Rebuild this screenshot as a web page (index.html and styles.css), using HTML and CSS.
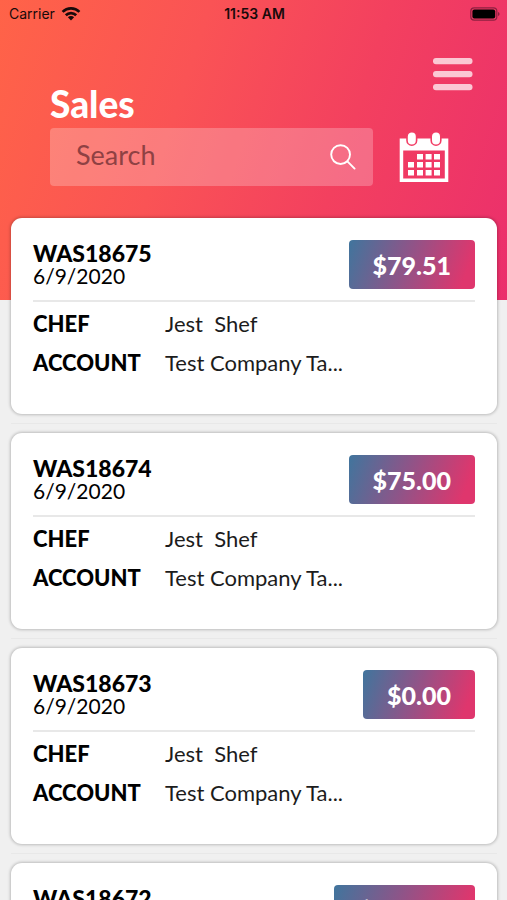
FILE: index.html
```html
<!DOCTYPE html>
<html lang="en">
<head>
<meta charset="utf-8">
<meta name="viewport" content="width=device-width, initial-scale=1">
<title>Sales</title>
<link rel="stylesheet" href="styles.css">
</head>
<body>
<div class="app">
  <div class="status">
    <div class="status-carrier">
      <span>Carrier</span>
      <svg width="20" height="16" viewBox="0 0 20 16" aria-hidden="true"><g fill="none" stroke="#190a0a" stroke-width="2.7"><path d="M1.6 5.9a12 12 0 0 1 16.8 0"/><path d="M4.8 9.2a7.4 7.4 0 0 1 10.4 0"/></g><path fill="#190a0a" d="M6.9 11.3a4.4 4.4 0 0 1 6.2 0L10 14.5z"/></svg>
    </div>
    <div class="status-time">11:53 AM</div>
    <div class="status-battery">
      <svg width="30" height="14" viewBox="0 0 30 14" aria-hidden="true"><rect x=".8" y=".8" width="26" height="12.4" rx="3.4" fill="none" stroke="#8d2040" stroke-width="1.2"/><rect x="2.4" y="2.4" width="22.8" height="9.2" rx="2" fill="#000"/><path d="M28 5v4q1.6-.6 1.6-2T28 5z" fill="#8d2040"/></svg>
    </div>
  </div>
  <header class="header">
    <div class="header-top">
      <h1>Sales</h1>
      <button class="icon-button menu" aria-label="Menu">
        <svg width="40" height="34" viewBox="0 0 40 34"><g fill="#fff" fill-opacity=".72"><rect x="0" y="1" width="39.5" height="6.2" rx="3"/><rect x="0" y="14" width="39.5" height="6.2" rx="3"/><rect x="0" y="27" width="39.5" height="6.2" rx="3"/></g></svg>
      </button>
    </div>
    <div class="header-search">
      <div class="search">
        <input type="text" placeholder="Search" aria-label="Search">
        <button class="icon-button" aria-label="Run search">
          <svg width="26" height="26" viewBox="0 0 26 26"><g fill="none" stroke="#fff" stroke-width="1.9" stroke-linecap="round"><circle cx="10.6" cy="10.6" r="9.4"/><path d="M17.4 17.4l7.2 7.2"/></g></svg>
        </button>
      </div>
      <button class="icon-button" aria-label="Pick dates">
        <svg width="50" height="51" viewBox="0 0 50 51"><path fill="#fff" fill-rule="evenodd" d="M.7 6.6h48.6v43.4H.7zM4.2 18.6v27.8h41.6V18.6z"/><g fill="#fff" stroke="#f23d65" stroke-width="1.6"><rect x="8" y="-.4" width="9.6" height="13.6" rx="4.8"/><rect x="32.2" y="-.4" width="9.6" height="13.6" rx="4.8"/></g><path fill="#fff" d="M18 22h6v5.4h-6zM26.6 22h6v5.4h-6zM35 22h6v5.4h-6zM9 30h6v5.4H9zM18 30h6v5.4h-6zM26.6 30h6v5.4h-6zM35 30h6v5.4h-6zM9 38h6v5.4H9zM18 38h6v5.4h-6zM26.6 38h6v5.4h-6zM35 38h6v5.4h-6z"/></svg>
      </button>
    </div>
  </header>
  <main class="list">
    <article class="card">
      <div class="card-head"><div><h2>WAS18675</h2><p>6/9/2020</p></div><button class="amount">$79.51</button></div>
      <dl><dt>CHEF</dt><dd>Jest&nbsp; Shef</dd><dt>ACCOUNT</dt><dd>Test Company Ta...</dd></dl>
    </article>
    <hr>
    <article class="card">
      <div class="card-head"><div><h2>WAS18674</h2><p>6/9/2020</p></div><button class="amount">$75.00</button></div>
      <dl><dt>CHEF</dt><dd>Jest&nbsp; Shef</dd><dt>ACCOUNT</dt><dd>Test Company Ta...</dd></dl>
    </article>
    <hr>
    <article class="card">
      <div class="card-head"><div><h2>WAS18673</h2><p>6/9/2020</p></div><button class="amount">$0.00</button></div>
      <dl><dt>CHEF</dt><dd>Jest&nbsp; Shef</dd><dt>ACCOUNT</dt><dd>Test Company Ta...</dd></dl>
    </article>
    <hr>
    <article class="card">
      <div class="card-head"><div><h2>WAS18672</h2><p>6/9/2020</p></div><button class="amount">$150.00</button></div>
      <dl><dt>CHEF</dt><dd>Jest&nbsp; Shef</dd><dt>ACCOUNT</dt><dd>Test Company Ta...</dd></dl>
    </article>
  </main>
</div>
</body>
</html>
```
FILE: styles.css
```css
* {
  box-sizing: border-box;
}

body,
h1,
h2,
p,
dl,
dd {
  margin: 0;
}

body {
  background: #f0f0f0;
  color: #000;
  font-family: Lato, "Open Sans", sans-serif;
}

.app {
  height: 100vh;
  overflow: hidden;
  background: linear-gradient(108deg, #ff6348 0%, #fa5355 35%, #f3405f 65%, #eb2f6c 100%) no-repeat top / 100% 300px;
}

.status {
  display: grid;
  grid-template-columns: 1fr auto 1fr;
  align-items: center;
  height: 27px;
  padding: 0 7px 0 9px;
  color: #190a0a;
  font-family: Inter, sans-serif;
  font-size: 14px;
}

.status-carrier {
  display: flex;
  align-items: center;
  gap: 6px;
}

.status-time {
  font-weight: 600;
}

.status-battery {
  display: flex;
  justify-content: flex-end;
}

.icon-button {
  display: flex;
  padding: 0;
  border: 0;
  background: none;
}

.header {
  padding: 30px 34px 0 50px;
}

.header-top {
  display: flex;
  justify-content: space-between;
  height: 71px;
}

h1 {
  align-self: flex-end;
  color: #fff;
  font-size: 37px;
  font-weight: 900;
  line-height: 48px;
}

.menu {
  align-self: flex-start;
}

.header-search {
  display: flex;
  align-items: center;
  gap: 26px;
  padding-right: 24px;
}

.search {
  display: flex;
  flex: 1;
  align-items: center;
  min-width: 0;
  height: 58px;
  padding: 0 17px 0 26px;
  border-radius: 4px;
  background: rgba(255, 255, 255, 0.24);
}

.search input {
  flex: 1;
  min-width: 0;
  height: 100%;
  padding: 0 0 6px;
  border: 0;
  outline: 0;
  background: none;
  color: #7f3a3c;
  font: 27px Lato, sans-serif;
}

.search input::placeholder {
  color: #8f4143;
  opacity: 1;
}

.list {
  padding: 32px 10px 0 11px;
}

.card {
  padding: 22px 22px 32px;
  border-radius: 11px;
  background: #fff;
  box-shadow: 0 0 3px 1px rgba(0, 0, 0, 0.22);
}

.card-head {
  display: flex;
  align-items: flex-start;
  justify-content: space-between;
  height: 62px;
  margin-bottom: 2px;
  border-bottom: 2px solid #e8e8e8;
}

h2 {
  font-size: 23px;
  font-weight: 900;
  line-height: 26px;
}

.card-head p {
  font-size: 21px;
  line-height: 20px;
}

.amount {
  height: 49px;
  padding: 0 24px;
  border: 0;
  border-radius: 4px;
  background: linear-gradient(110deg, #40759d 0%, #8f5488 45%, #df366d 90%);
  color: #fff;
  font: 900 25px Lato, sans-serif;
}

dl {
  display: grid;
  grid-template-columns: 132px 1fr;
  font-size: 22px;
  line-height: 39px;
}

dt {
  font-weight: 900;
}

dd {
  color: #1c1c1c;
}

hr {
  height: 1px;
  margin: 9px 0;
  border: 0;
  background: #e8e8e8;
}
```
